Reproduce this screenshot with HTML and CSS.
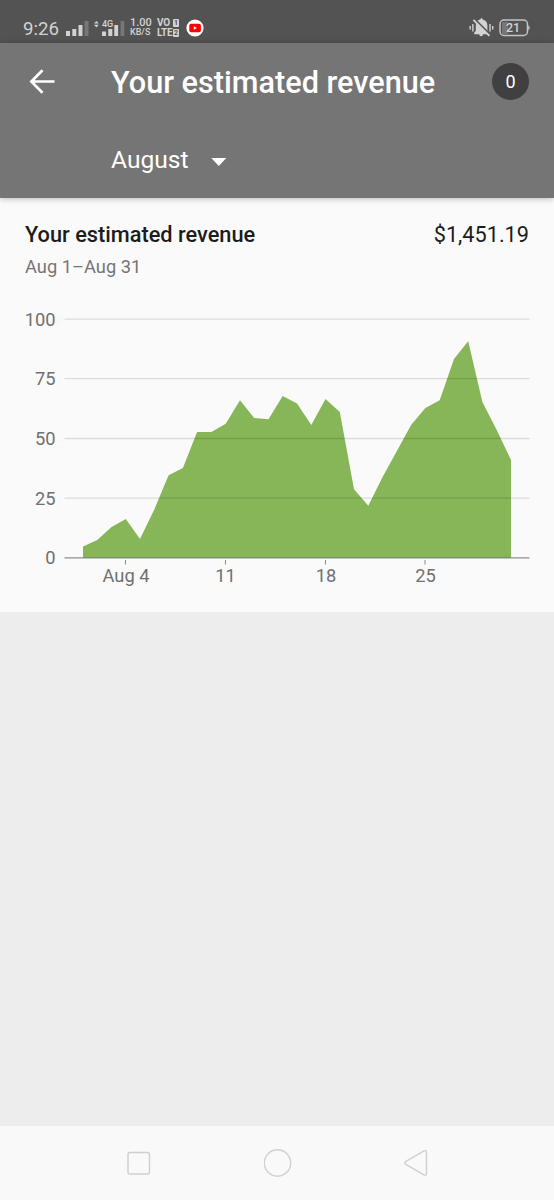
FILE: index.html
```html
<!DOCTYPE html>
<html lang="en">
<head>
  <meta charset="UTF-8">
  <meta name="viewport" content="width=device-width, initial-scale=1.0">
  <title>Your estimated revenue</title>
  <link rel="stylesheet" href="styles.css">
</head>
<body>
  <div class="status">
    <span class="time">9:26</span>
    <svg class="signal" width="24" height="18" viewBox="0 0 24 18">
      <path fill="#d2d2d2" d="M0 12h4v5H0zM6.300 10h4v7h-4zM12.500 6h4v11h-4z"/>
      <path fill="#777" d="M18.500 2h4v15h-4z"/>
    </svg>
    <svg class="signal-4g" width="31" height="18" viewBox="0 0 31 18">
      <path fill="#d2d2d2" d="M0 4.500l2.400-2.600 2.400 2.600zM0 5.800h4.800L2.400 8.400zM8 12.500h4V17H8zM14.300 10h4v7h-4zM20.300 6h3.800v11h-3.800z"/>
      <path fill="#777" d="M26.500 2h3.800v15h-3.800z"/>
      <text class="net" x="8" y="8">4G</text>
    </svg>
    <div class="speed"><b>1.00</b><span>KB/S</span></div>
    <div class="volte">
      <div>VO<i>1</i></div>
      <div>LTE<i>2</i></div>
    </div>
    <svg class="youtube" width="18" height="18" viewBox="0 0 18 18">
      <circle cx="9" cy="9" r="8.600" fill="#fff"/>
      <rect x="3.300" y="4.800" width="11.600" height="8.400" rx="1.800" fill="#f00"/>
      <path d="M7.800 7.200v3.600l3.100-1.800z" fill="#fff"/>
    </svg>
    <svg class="mute" width="25" height="22" viewBox="0 0 25 22">
      <path fill="#d2d2d2" d="M5.200 17.300v-1.600l1.600-2V8.500c0-3.500 2-5.600 4.500-6a1.200 1.200 0 0 1 2.400 0c2.800.5 4.700 2.700 4.700 6v5.200l1.700 2v1.600h-6.100a1.900 1.900 0 0 1-3.800 0z"/>
      <path stroke="#535353" stroke-width="1.800" d="M5.500 1.800l16 16"/>
      <path stroke="#d2d2d2" stroke-width="1.800" d="M4.400 2.800l16 16"/>
      <path stroke="#d2d2d2" stroke-width="1.400" d="M1.200 9v3.500M3.900 7v7.400M21 7v7.400M23.700 9v3.500"/>
    </svg>
    <svg class="battery" width="31" height="18" viewBox="0 0 31 18">
      <rect x="3" y="3" width="6" height="12" fill="#777"/>
      <rect x="1" y="1" width="27.500" height="15.500" rx="4" fill="none" stroke="#c4c4c4" stroke-width="1.500"/>
      <path d="M29.200 6.500q1.500.5 1.500 2.200t-1.500 2.200z" fill="#c4c4c4"/>
      <text class="level" x="14" y="13.300">21</text>
    </svg>
  </div>

  <header class="appbar">
    <div class="toolbar">
      <svg class="back" width="26" height="26" viewBox="0 0 26 26">
        <path fill="none" stroke="#fff" stroke-width="2.700" d="M25.500 12.500H3M13.500 1.200L2.400 12.500 13.500 23.800"/>
      </svg>
      <h1>Your estimated revenue</h1>
      <span class="count">0</span>
    </div>
    <div class="month">
      <span>August</span>
      <svg width="16" height="12" viewBox="0 0 16 12"><path d="M.3 4h15L7.800 12z" fill="#fff"/></svg>
    </div>
  </header>

  <section class="card">
    <div class="summary">
      <h2>Your estimated revenue</h2>
      <span class="amount">$1,451.19</span>
    </div>
    <p class="range">Aug 1–Aug 31</p>
    <svg class="chart" width="554" height="300" viewBox="0 300 554 300">
      <path class="area" d="M83 558V546.500L97.300 540 111.500 527 125.800 519 140 539 154.300 509.500 168.600 475.300 182.900 468 197.100 432H211.400L225.700 423.700 240 400.300 254.200 418 268.500 419.300 282.700 396 297 403.500 311.300 425 325.500 399 339.800 412 354 489.300 368.300 505.700 382.600 477 396.900 451 411.100 425 425.400 408 439.700 400.300 454 359 468.200 341.300 482.400 402 496.700 430 511 460V558z"/>
      <path class="grid" d="M64.500 319.200H529.500M64.500 378.700H529.500M64.500 438.500H529.500M64.500 498.200H529.500"/>
      <path class="axis" d="M64.500 557.800H529.500"/>
      <path class="tick" d="M125.500 560V564.500M225.500 560V564.500M325.500 560V564.500M425 560V564.500"/>
      <g class="y-labels">
        <text x="55.500" y="326">100</text>
        <text x="55.500" y="385.300">75</text>
        <text x="55.500" y="445">50</text>
        <text x="55.500" y="504.500">25</text>
        <text x="55.500" y="564">0</text>
      </g>
      <g class="x-labels">
        <text x="126" y="581.700">Aug 4</text>
        <text x="225.500" y="581.700">11</text>
        <text x="326" y="581.700">18</text>
        <text x="425.500" y="581.700">25</text>
      </g>
    </svg>
  </section>

  <nav class="navbar">
    <svg width="28" height="30" viewBox="0 0 28 30"><rect x="3" y="4.500" width="21.500" height="21.500" rx="2"/></svg>
    <svg width="28" height="30" viewBox="0 0 28 30"><circle cx="13.500" cy="15" r="13.200"/></svg>
    <svg width="28" height="30" viewBox="0 0 28 30"><path d="M3.500 13.700L22 2.900q2.500-1 2.500 1.600V25.200q0 2.600-2.500 1.600L3.500 16.100q-1.500-1.200 0-2.400z"/></svg>
  </nav>
</body>
</html>
```
FILE: styles.css
```css
* {
  margin: 0;
  padding: 0;
  box-sizing: border-box;
}
body {
  display: flex;
  flex-direction: column;
  height: 1200px;
  background-color: #ededed;
  font-family: Roboto, "Liberation Sans", sans-serif;
}
.status {
  display: flex;
  align-items: center;
  height: 43px;
  padding: 12px 24px 0 23px;
  background-color: #535353;
  color: #d2d2d2;
}
.time {
  width: 36px;
  padding-top: 2px;
  font-size: 18.7px;
}
.signal {
  margin-left: 7px;
}
.signal-4g {
  margin-left: 4px;
}
.net {
  font-size: 9px;
  font-weight: 500;
  fill: #d2d2d2;
}
.speed {
  display: flex;
  flex-direction: column;
  width: 22px;
  margin-left: 5px;
  font-size: 9px;
  line-height: 10px;
  font-weight: 500;
}
.speed b {
  height: 9px;
  font-size: 11px;
  line-height: 9px;
  font-weight: 500;
}
.speed span {
  height: 10px;
}
.volte {
  width: 24px;
  margin-left: 5px;
  font-size: 10px;
  line-height: 10px;
  font-weight: 700;
}
.volte div {
  display: flex;
  align-items: center;
  width: 22px;
  letter-spacing: -0.2px;
}
.volte i {
  width: 6px;
  height: 8px;
  margin-left: auto;
  border-radius: 1px;
  background-color: #d2d2d2;
  color: #535353;
  font-size: 7px;
  line-height: 8px;
  font-style: normal;
  text-align: center;
}
.youtube {
  margin-left: 5px;
}
.mute {
  margin-left: auto;
}
.battery {
  margin-left: 5px;
}
.level {
  font-size: 12.5px;
  font-weight: 500;
  fill: #d2d2d2;
  text-anchor: middle;
}
.appbar {
  position: relative;
  height: 155px;
  background-color: #757575;
  color: #fff;
  box-shadow: 0 1px 6px rgba(0, 0, 0, 0.25);
}
.toolbar {
  display: flex;
  align-items: center;
  height: 77px;
  padding: 0 25px 0 29px;
}
.toolbar h1 {
  margin-left: 56px;
  padding-top: 3px;
  font-size: 30.65px;
  line-height: 40px;
  font-weight: 500;
  white-space: nowrap;
}
.count {
  width: 37px;
  height: 37px;
  margin-left: auto;
  border-radius: 50%;
  background-color: #404040;
  font-size: 18px;
  line-height: 38px;
  text-align: center;
}
.month {
  display: flex;
  align-items: center;
  height: 79px;
  padding-left: 111px;
  font-size: 24.6px;
}
.month span {
  width: 100px;
}
.card {
  height: 414px;
  background-color: #fafafa;
}
.summary {
  display: flex;
  justify-content: space-between;
  align-items: center;
  height: 50px;
  padding: 24px 25px 0;
  color: #1c1c1c;
}
.summary h2 {
  font-size: 21.75px;
  line-height: 28px;
  font-weight: 500;
}
.amount {
  font-size: 21.7px;
  line-height: 28px;
}
.range {
  height: 52px;
  padding: 7px 25px 0;
  color: #757575;
  font-size: 18.3px;
  line-height: 24px;
}
.chart {
  display: block;
  font-size: 18.3px;
}
.chart path {
  fill: none;
}
.chart .grid {
  stroke: #000;
  stroke-opacity: 0.12;
  stroke-width: 1.3;
}
.chart .area {
  fill: #86b657;
}
.chart .axis {
  stroke: #757575;
  stroke-opacity: 0.8;
  stroke-width: 1.3;
}
.chart .tick {
  stroke: #8a8a8a;
}
.chart text {
  fill: #707070;
}
.y-labels {
  text-anchor: end;
}
.x-labels {
  text-anchor: middle;
}
.navbar {
  display: flex;
  justify-content: space-between;
  align-items: center;
  height: 74px;
  margin-top: auto;
  padding: 0 124px 0 125px;
  background-color: #f9f9f9;
}
.navbar svg {
  fill: none;
  stroke: #cfcfcf;
  stroke-width: 1.4;
}
```
